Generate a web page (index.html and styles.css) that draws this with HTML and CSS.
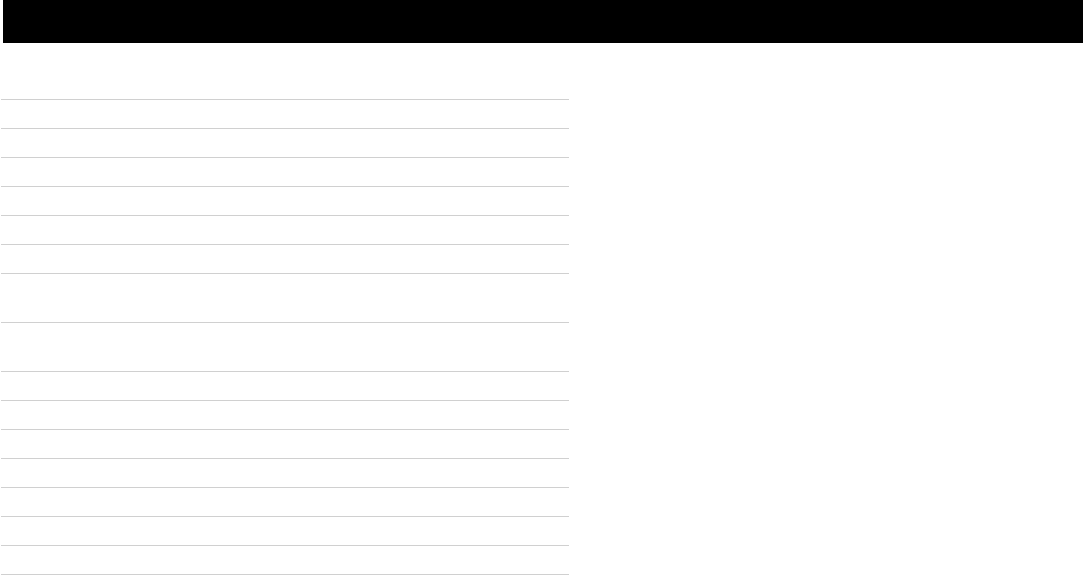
FILE: index.html
```html
<!DOCTYPE html>
<html lang="en">
  <head>
    <meta charset="UTF-8" />
    <meta name="viewport" content="width=device-width, initial-scale=1.0" />
    <title>List</title>
    <link rel="stylesheet" href="styles.css">
  </head>
  <body>
    <header class="topbar"></header>

    <main class="content">
      <!-- empty rows -->
      <div class="rows">
        <div class="row"></div>
        <div class="row"></div>
        <div class="row"></div>
        <div class="row"></div>
        <div class="row"></div>
        <div class="row"></div>
        <div class="row tall"></div>
        <div class="row tall"></div>
        <div class="row"></div>
        <div class="row"></div>
        <div class="row"></div>
        <div class="row"></div>
        <div class="row"></div>
        <div class="row"></div>
        <div class="row"></div>
      </div>
    </main>
  </body>
</html>
```

FILE: styles.css
```css
body {
  font-family: "Liberation Sans", Arial, sans-serif;
  background-color: #ffffff;
  margin: 0;
}

.topbar {
  background-color: #000000;
  height: 43px;
  margin-left: 3px;
}

.content {
  padding-top: 56px;
  padding-left: 1px;
}

.rows {
  width: 568px;
  border-top: 1px solid #d0d0d0;
}

.row {
  height: 28px;
  border-bottom: 1px solid #d0d0d0;
}

.row.tall {
  height: 48px;
}
```
